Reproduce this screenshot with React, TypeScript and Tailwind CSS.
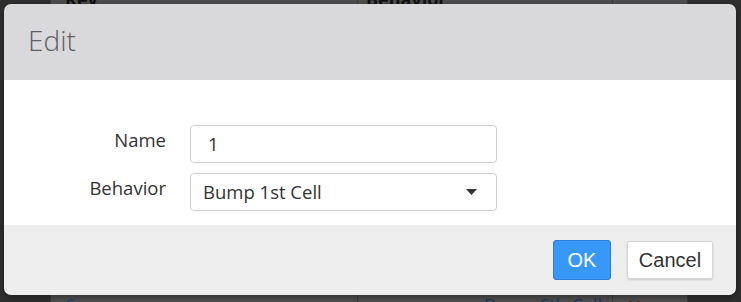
import React from 'react';

const sans = { fontFamily: '"Open Sans", "Noto Sans", sans-serif' };

function BackTable() {
  // the page under the modal backdrop, only the edges show
  return (
    <div className="w-[741px] h-[302px] bg-[#2f2f2f] flex">
      <div className="ml-[50px] w-[638px] h-full bg-[#4e4e4e] flex flex-col justify-between border-x border-[#3a3a3a]">
        <div className="-mt-[14px] h-[20px] flex text-[18px] font-bold text-[#111]" style={sans}>
          <div className="w-[307px] pl-[14px] border-r border-[#3d3d3d]">Key</div>
          <div className="w-[255px] pl-[8px] border-r border-[#3d3d3d]">Behavior</div>
          <div className="flex-1" />
        </div>
        <div className="h-[8px] flex text-[18px] text-[#222] overflow-hidden items-start" style={sans}>
          <div className="w-[307px] pl-[14px] border-r border-[#3d3d3d] text-[#28406a] leading-[22px]">6</div>
          <div className="w-[255px] pr-[10px] text-right border-r border-[#3d3d3d] text-[#23395e] leading-[22px]">Bump 6th Cell</div>
          <div className="flex-1 pl-[14px] text-[#7a1a1a] leading-[22px]">✕</div>
        </div>
      </div>
    </div>
  );
}

export default function App() {
  return (
    <div className="relative w-[741px] h-[302px] overflow-hidden">
      <BackTable />

      <div className="absolute left-[4px] top-[4px] w-[732px] h-[291px] rounded-[7px] overflow-hidden flex flex-col shadow-[0_2px_6px_rgba(0,0,0,0.4)]">
        <div className="h-[76px] bg-[#d9d9dc] flex items-center px-[24px]">
          <span className="text-[28px] font-light text-[#5f5f63] leading-none -mt-[4px]" style={sans}>
            Edit
          </span>
        </div>

        <div className="h-[145px] bg-white flex flex-col gap-[10px] pt-[45px]" style={sans}>
          <div className="flex items-start gap-[24px]">
            <label className="w-[162px] text-right text-[18.5px] text-[#333] leading-[26px] pt-[2px]">Name</label>
            <div className="w-[307px] h-[38px] border border-[#cfcfcf] rounded-[4px] flex items-center pl-[17px] text-[18.5px] text-[#333]">
              1
            </div>
          </div>
          <div className="flex items-start gap-[24px]">
            <label className="w-[162px] text-right text-[18.5px] text-[#333] leading-[26px] pt-[2px]">Behavior</label>
            <div className="w-[307px] h-[38px] border border-[#cfcfcf] rounded-[4px] flex items-center justify-between pl-[12px] pr-[19px] text-[18.5px] text-[#333]">
              <span>Bump 1st Cell</span>
              <svg width="11" height="6" viewBox="0 0 11 6">
                <path d="M0 0 L11 0 L5.5 6 Z" fill="#333" />
              </svg>
            </div>
          </div>
        </div>

        <div className="flex-1 bg-[#eeeeee] flex items-center justify-end gap-[16px] pr-[23px]" style={{ fontFamily: '"Liberation Sans", Arial, sans-serif' }}>
          <button className="w-[58px] h-[40px] bg-[#3798fa] border border-[#2a7fd6] rounded-[3px] text-white text-[20px]">
            OK
          </button>
          <button className="w-[86px] h-[38px] bg-white border border-[#d6d6d6] rounded-[2px] text-[#333] text-[20px] shadow-[0_1px_2px_rgba(0,0,0,0.15)]">
            Cancel
          </button>
        </div>
      </div>
    </div>
  );
}
